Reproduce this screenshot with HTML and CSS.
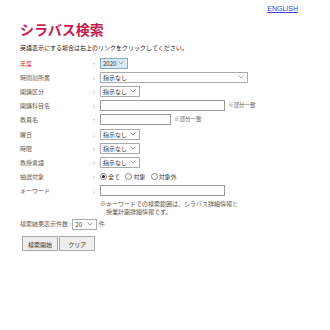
FILE: index.html
```html
<!DOCTYPE html>
<html lang="ja">

<head>
    <meta charset="UTF-8">
    <title>シラバス検索</title>
    <link rel="stylesheet" href="styles.css">
</head>

<body>

    <div class="lang"><a href="#">ENGLISH</a></div>

    <h1>シラバス検索</h1>
    <p class="info">英語表示にする場合は右上のリンクをクリックしてください。</p>

    <table class="search">
        <tr>
            <th class="req">年度</th>
            <td class="colon">:</td>
            <td><select class="sel year"><option>2020</option></select></td>
        </tr>
        <tr>
            <th>時間割所属</th>
            <td class="colon">:</td>
            <td><select class="sel wide"><option>指示なし</option></select></td>
        </tr>
        <tr>
            <th>開講区分</th>
            <td class="colon">:</td>
            <td><select class="sel"><option>指示なし</option></select></td>
        </tr>
        <tr>
            <th>開講科目名</th>
            <td class="colon">:</td>
            <td><input type="text" class="txt long"><span class="note">※部分一致</span></td>
        </tr>
        <tr>
            <th>教員名</th>
            <td class="colon">:</td>
            <td><input type="text" class="txt short"><span class="note">※部分一致</span></td>
        </tr>
        <tr>
            <th>曜日</th>
            <td class="colon">:</td>
            <td><select class="sel"><option>指示なし</option></select></td>
        </tr>
        <tr>
            <th>時限</th>
            <td class="colon">:</td>
            <td><select class="sel"><option>指示なし</option></select></td>
        </tr>
        <tr>
            <th>教授言語</th>
            <td class="colon">:</td>
            <td><select class="sel"><option>指示なし</option></select></td>
        </tr>
        <tr>
            <th>抽選対象</th>
            <td class="colon">:</td>
            <td class="radios">
                <label><span class="radio on"></span>全て</label>
                <label><span class="radio"></span>対象</label>
                <label><span class="radio"></span>対象外</label>
            </td>
        </tr>
        <tr>
            <th>キーワード</th>
            <td class="colon">:</td>
            <td><input type="text" class="txt long"></td>
        </tr>
        <tr>
            <th></th>
            <td></td>
            <td class="memo">※キーワードでの検索範囲は、シラバス詳細情報と<br>　授業計画詳細情報です。</td>
        </tr>
    </table>

    <div class="count">
        検索結果表示件数 : <select class="sel num"><option>20</option></select> 件
    </div>

    <div class="buttons">
        <button type="button" class="btn">検索開始</button>
        <button type="button" class="btn">クリア</button>
    </div>

</body>

</html>
```

FILE: styles.css
```css
body {
    font-family: "Noto Sans CJK JP", sans-serif;
    font-size: 6px;
    color: #333;
    background-color: #fff;
    margin: 0;
    padding: 0 20px;
}

.lang {
    text-align: right;
    padding-top: 5px;
    padding-right: 12px;
    font-family: "Liberation Sans", sans-serif;
    font-size: 7px;
}

.lang a {
    color: #3344cc;
}

h1 {
    margin: 7px 0 0;
    font-size: 14px;
    font-weight: bold;
    color: #c41e4f;
    line-height: 20px;
}

.info {
    margin: 4px 0 4px;
    font-size: 6px;
    color: #222;
}

.search {
    border-collapse: collapse;
}

.search th {
    width: 73px;
    text-align: left;
    font-weight: normal;
    color: #606060;
    padding: 0;
    height: 14.2px;
}

.search th.req {
    color: #d0304a;
}

.search td {
    padding: 0;
}

.search td.colon {
    width: 7px;
    text-align: left;
    color: #606060;
}

.sel {
    -webkit-appearance: none;
    appearance: none;
    font-family: "Noto Sans CJK JP", sans-serif;
    font-size: 6px;
    height: 11px;
    padding: 0 0 0 2px;
    border: 1px solid #aaa;
    border-radius: 0;
    background-color: #fff;
    background-image: url("data:image/svg+xml,%3Csvg xmlns='http://www.w3.org/2000/svg' width='6' height='4'%3E%3Cpath d='M0.5 0.5 L3 3 L5.5 0.5' fill='none' stroke='%23888' stroke-width='0.8'/%3E%3C/svg%3E");
    background-repeat: no-repeat;
    background-position: right 3px center;
    color: #333;
    width: 40px;
    vertical-align: middle;
    line-height: 9px;
}

.sel.year {
    width: 28px;
    background-color: #d8e8f4;
    border-color: #8ab;
}

.sel.wide {
    width: 148px;
}

.sel.num {
    width: 25px;
}

.txt {
    height: 11px;
    box-sizing: border-box;
    border: 1px solid #999;
    padding: 0;
    vertical-align: middle;
}

.txt.long {
    width: 125px;
}

.txt.short {
    width: 71px;
}

.note {
    margin-left: 3px;
    font-size: 5.5px;
    color: #606060;
}

.radios label {
    margin-right: 4px;
    color: #444;
}

.radio {
    display: inline-block;
    width: 5px;
    height: 5px;
    border: 1px solid #888;
    border-radius: 50%;
    margin-right: 1px;
    vertical-align: -1px;
    position: relative;
}

.radio.on::after {
    content: "";
    position: absolute;
    left: 1px;
    top: 1px;
    width: 3px;
    height: 3px;
    border-radius: 50%;
    background-color: #333;
}

.memo {
    line-height: 8px;
    color: #555;
    padding-top: 2px !important;
}

.count {
    margin-top: 3px;
    color: #606060;
}

.buttons {
    margin-top: 6px;
    padding-left: 2px;
}

.btn {
    font-family: "Noto Sans CJK JP", sans-serif;
    font-size: 6px;
    color: #333;
    background-color: #eee;
    border: 1px solid #aaa;
    padding: 3px 5px;
    height: 15px;
    width: 36px;
    margin-right: 0;
}
```
